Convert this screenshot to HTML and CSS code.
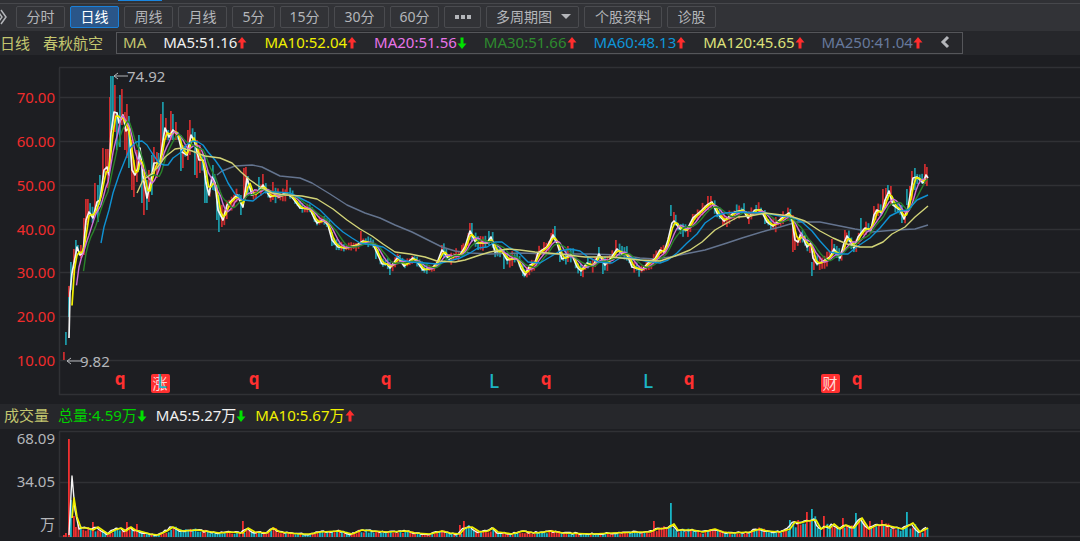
FILE: index.html
```html
<!DOCTYPE html>
<html lang="zh-CN">
<head>
    <meta charset="UTF-8">
    <meta name="viewport" content="width=device-width, initial-scale=1.0">
    <title>春秋航空 日线</title>
    <link rel="stylesheet" href="styles.css">
</head>
<body>
    <svg class="defs" aria-hidden="true">
        <symbol id="up" viewBox="0 0 10 14"><path d="M5 1 L9.5 6.5 H6.5 V12.5 H3.5 V6.5 H0.5 Z"/></symbol>
        <symbol id="down" viewBox="0 0 10 14"><path d="M5 13 L9.5 7.5 H6.5 V1.5 H3.5 V7.5 H0.5 Z"/></symbol>
    </svg>

    <nav class="toolbar">
        <span class="tab-strip"></span>
        <button class="more" aria-label="展开">
            <svg width="8" height="16" viewBox="0 0 8 16"><path d="M-3 1 L2 8 L-3 15 M1 1 L6 8 L1 15"/></svg>
        </button>
        <button class="btn">分时</button>
        <button class="btn active">日线</button>
        <button class="btn">周线</button>
        <button class="btn">月线</button>
        <button class="btn narrow">5分</button>
        <button class="btn">15分</button>
        <button class="btn mid">30分</button>
        <button class="btn">60分</button>
        <button class="btn dots" aria-label="更多周期"><i></i><i></i><i></i></button>
        <span class="select-wrap">
            <select class="btn" aria-label="多周期图"><option>多周期图</option></select>
        </span>
        <button class="btn wide">个股资料</button>
        <button class="btn">诊股</button>
    </nav>

    <div class="legend">
        <span class="name period">日线</span>
        <span class="name">春秋航空</span>
        <div class="ma-box">
            <span class="name">MA</span>
            <span class="ma5">MA5:51.16<svg class="arrow up"><use href="#up"/></svg></span>
            <span class="ma10">MA10:52.04<svg class="arrow up"><use href="#up"/></svg></span>
            <span class="ma20">MA20:51.56<svg class="arrow down"><use href="#down"/></svg></span>
            <span class="ma30">MA30:51.66<svg class="arrow up"><use href="#up"/></svg></span>
            <span class="ma60">MA60:48.13<svg class="arrow up"><use href="#up"/></svg></span>
            <span class="ma120">MA120:45.65<svg class="arrow up"><use href="#up"/></svg></span>
            <span class="ma250">MA250:41.04<svg class="arrow up"><use href="#up"/></svg></span>
            <button class="collapse" aria-label="收起">
                <svg width="10" height="14" viewBox="0 0 10 14"><path d="M8 2 L3 7 L8 12"/></svg>
            </button>
        </div>
    </div>

    <svg class="chart price" id="price"></svg>

    <div class="legend volume-legend">
        <span class="name">成交量</span>
        <span class="total">总量:4.59万<svg class="arrow down"><use href="#down"/></svg></span>
        <span class="ma5">MA5:5.27万<svg class="arrow down"><use href="#down"/></svg></span>
        <span class="ma10">MA10:5.67万<svg class="arrow up"><use href="#up"/></svg></span>
    </div>

    <svg class="chart volume" id="volume"></svg>

    <script src="chart.js"></script>
</body>
</html>
```

FILE: styles.css
```css
* {
    box-sizing: border-box;
}
body {
    margin: 0;
    background: #1d1e22;
    color: #b4b6ba;
    font-family: "Noto Sans", "Noto Sans CJK SC", sans-serif;
    font-size: 15px;
    overflow: hidden;
}
button, select {
    font: inherit;
    color: inherit;
    background: none;
    border: none;
    padding: 0;
}
.defs {
    display: none;
}

/* toolbar */
.toolbar {
    position: relative;
    display: flex;
    align-items: center;
    gap: 5px;
    height: 31px;
    padding-top: 3px;
    background: linear-gradient(#303135 3px, #47484c 3px, #47484c 4px, #323337 4px);
}
.tab-strip {
    position: absolute;
    left: 118px;
    top: 0;
    width: 44px;
    height: 1px;
    background: #1a86e0;
}
.more {
    width: 11px;
    height: 16px;
    flex: none;
    display: flex;
}
.more svg, .collapse svg {
    fill: none;
    stroke: #b4b6ba;
    stroke-width: 1.5;
}
.btn {
    flex: none;
    width: 49px;
    height: 22px;
    border: 1px solid #4a4b4f;
    border-radius: 2px;
    font-size: 14px;
    line-height: 20px;
    text-align: center;
}
.btn.active {
    background: #2a5689;
    border-color: #1a80d8;
    color: #fff;
}
.btn.narrow {
    width: 43px;
}
.btn.mid {
    width: 51px;
}
.btn.wide {
    width: 78px;
}
.btn.dots {
    width: 37px;
    display: flex;
    align-items: center;
    justify-content: center;
    gap: 2px;
}
.dots i {
    width: 4px;
    height: 4px;
    background: #b4b6ba;
}
.select-wrap {
    position: relative;
    display: flex;
}
.select-wrap select {
    appearance: none;
    width: 93px;
    padding-left: 9px;
    text-align: left;
}
.select-wrap::after {
    content: "";
    position: absolute;
    right: 8px;
    top: 8px;
    border: 5px solid transparent;
    border-top-color: #b4b6ba;
    border-bottom: none;
    pointer-events: none;
}

/* indicator rows */
.legend {
    display: flex;
    align-items: center;
    gap: 13px;
    height: 24px;
    padding-bottom: 1px;
    background: #26272b;
    line-height: 20px;
    white-space: nowrap;
}
.ma-box {
    display: flex;
    align-items: center;
    gap: 17px;
    height: 22px;
    padding: 0 12px 1px 6px;
    border: 1px solid #55565a;
}
.volume-legend {
    height: 25px;
    gap: 9px;
    padding-left: 4px;
    padding-bottom: 3px;
}
.arrow {
    width: 10px;
    height: 14px;
    vertical-align: -2px;
}
.arrow.up {
    fill: #ff2d2d;
}
.arrow.down {
    fill: #00e000;
}
.name { color: #c3c66f; }
.total { color: #00d000; }
.ma5 { color: #f0f0f0; }
.ma10 { color: #f0f000; }
.ma20 { color: #e874e8; }
.ma30 { color: #2e8b2e; }
.ma60 { color: #0f95d8; }
.ma120 { color: #dde07a; }
.ma250 { color: #66799c; }
.collapse {
    height: 14px;
    display: flex;
}
.collapse svg {
    stroke-width: 3;
}

/* charts */
.chart {
    display: block;
    width: 100%;
}
.price {
    height: 349px;
}
.volume {
    height: 137px;
}
.grid {
    stroke: #303135;
    stroke-width: 1.5;
}
.axis {
    fill: #b4b6ba;
    text-anchor: end;
}
.price .axis {
    fill: #f02c2c;
}
.note {
    fill: #b4b6ba;
}
.note-line {
    fill: none;
    stroke: #b4b6ba;
}
.bar-up { fill: #f03030; }
.bar-down { fill: #18b4c4; }
.price .bar-up { fill: #c82c2e; }
.price .bar-down { fill: #1c96a4; }
.line {
    fill: none;
    stroke-width: 1.4;
    stroke-linejoin: round;
}
.line-5 { stroke: #f4f4f4; }
.line-10 { stroke: #f0f000; }
.price .line-5, .line-10 { stroke-width: 1.7; }
.line-20 { stroke: #d070d8; }
.line-30 { stroke: #2a842a; }
.line-60 { stroke: #0f92d4; }
.line-120 { stroke: #d2d478; }
.line-250 { stroke: #64748f; }
.mark {
    font-size: 17px;
    font-weight: bold;
    text-anchor: middle;
}
.mark-q { fill: #ff3030; }
.mark-l {
    fill: #1cb4c4;
    font-size: 19px;
    font-weight: 500;
}
.badge { fill: #ff3030; }
.badge-text {
    fill: #ffd8d8;
    font-size: 15px;
    text-anchor: middle;
}
```

FILE: chart.js
```js
const NS = 'http://www.w3.org/2000/svg';
const STEP = 2.44;

// x,y knots of the averages
const ma5 = [69,338, 70,293, 72,273, 75,258, 77,247, 80,255, 83,253, 86,220, 89,212, 93,218, 97,202, 100,200, 104,170, 107,167, 109,175, 111,133, 114,112, 117,113, 119,123, 123,115, 126,131, 129,128, 132,170, 135,175, 138,168, 140,148, 143,177, 147,198, 151,180, 154,163, 160,163, 162,147, 165,128, 169,137, 173,130, 178,135, 182,152, 187,155, 191,135, 195,143, 199,160, 203,160, 206,183, 209,195, 212,177, 215,183, 218,210, 223,220, 227,205, 232,200, 237,195, 243,207, 247,178, 252,195, 257,193, 263,185, 270,197, 275,195, 279,197, 285,193, 292,197, 300,208, 310,209, 314,218, 317,223, 323,220, 328,225, 332,240, 338,247, 345,248, 357,245, 363,241, 373,244, 377,253, 382,264, 387,264, 390,268, 398,257, 404,266, 413,258, 418,263, 423,270, 432,268, 437,263, 442,250, 449,259, 455,255, 460,255, 465,247, 470,231, 476,243, 487,243, 491,237, 495,252, 502,251, 507,260, 517,258, 521,269, 525,275, 530,265, 535,263, 538,253, 547,247, 553,235, 557,243, 562,259, 572,255, 577,267, 581,271, 587,263, 593,266, 599,254, 605,265, 611,258, 617,249, 622,254, 627,254, 632,267, 642,270, 648,263, 655,259, 660,250, 664,252, 668,240, 672,223, 674,221, 680,229, 687,230, 693,218, 700,212, 707,205, 712,202, 717,213, 724,221, 735,212, 743,210, 748,218, 755,210, 761,210, 767,222, 773,226, 782,218, 789,213, 792,220, 795,240, 798,242, 801,233, 807,247, 811,243, 813,258, 817,264, 822,262, 830,257, 834,249, 840,258, 844,243, 847,236, 854,248, 858,237, 865,228, 871,230, 874,215, 877,210, 882,213, 885,200, 889,191, 893,205, 900,210, 904,219, 908,208, 913,178, 917,177, 923,183, 926,175, 928,178];
const ma60 = [101,243, 104,227, 109,210, 113,193, 119,175, 125,160, 130,148, 136,142, 142,141, 147,145, 152,153, 159,163, 164,165, 168,165, 173,158, 180,153, 186,145, 193,141, 198,142, 203,145, 208,152, 215,160, 222,170, 228,183, 235,194, 243,200, 253,201, 258,197, 265,192, 275,192, 290,193, 300,198, 310,203, 320,210, 327,217, 335,225, 343,232, 352,238, 360,243, 373,245, 383,247, 392,253, 400,259, 410,262, 425,263, 437,264, 445,262, 460,258, 470,253, 478,248, 487,247, 495,242, 502,242, 510,248, 518,252, 528,262, 540,263, 550,257, 560,251, 570,249, 580,251, 588,257, 598,262, 612,263, 620,258, 632,258, 645,261, 660,263, 668,260, 677,253, 687,243, 697,234, 705,223, 715,216, 725,213, 740,212, 765,213, 780,216, 792,217, 802,222, 812,231, 820,241, 830,252, 840,254, 848,254, 858,246, 870,238, 880,228, 890,216, 900,211, 908,210, 917,200, 928,195];
const ma120 = [137,193, 143,180, 150,175, 157,168, 165,157, 175,149, 182,148, 192,151, 205,156, 220,158, 232,163, 241,172, 250,180, 260,187, 272,193, 285,195, 302,196, 317,199, 333,209, 347,220, 360,229, 372,236, 383,244, 395,252, 410,254, 425,257, 437,261, 455,262, 465,260, 480,255, 490,252, 507,249, 520,250, 535,252, 560,254, 585,257, 612,257, 640,260, 660,261, 675,256, 690,250, 702,242, 715,230, 727,223, 738,217, 750,216, 765,213, 790,216, 805,221, 820,231, 833,238, 847,244, 860,247, 872,247, 883,242, 892,234, 905,227, 915,217, 928,206];
const ma250 = [217,175, 222,171, 235,166, 252,165, 262,167, 280,176, 300,178, 312,183, 330,194, 347,205, 365,213, 380,218, 395,225, 412,232, 428,240, 442,247, 455,251, 470,253, 490,254, 520,253, 550,254, 590,254, 620,255, 640,258, 655,259, 670,257, 690,253, 705,250, 727,243, 742,238, 765,231, 780,227, 797,222, 820,222, 840,226, 855,229, 872,232, 895,230, 915,229, 928,225];

// x, high, low, 1 = up
const swings = [
    [64,352,360,1], [66,332,345,0], [69,286,297,1], [69,297,317,0], [71,262,290,0], [74,249,275,1], [76,240,258,0], [81,245,258,1],
    [84,218,255,1], [86,199,225,1], [88,199,222,1], [95,183,215,1], [98,185,222,0], [100,175,205,0], [103,148,180,1], [106,149,175,1],
    [108,149,188,1], [110,97,165,1], [111,76,130,0], [113,76,130,0], [115,85,132,1], [117,112,150,0], [120,95,147,0], [122,89,125,1],
    [125,112,150,1], [127,104,158,1], [129,116,168,0], [132,140,190,1], [134,160,197,1], [137,150,182,1], [139,135,170,0], [142,165,203,0],
    [144,177,215,1], [147,180,210,0], [149,170,202,1], [152,155,195,0], [154,147,175,1], [157,152,178,1], [161,114,160,1], [163,102,150,0],
    [166,118,140,1], [171,111,140,1], [173,114,140,0], [176,122,140,1], [181,135,171,0], [183,145,168,1], [188,130,160,1], [190,120,155,1],
    [195,132,175,0], [197,140,178,1], [200,145,173,1], [205,155,203,0], [207,170,203,0], [213,165,190,0], [217,185,220,0], [219,195,232,0],
    [222,205,227,1], [241,195,215,0], [244,168,200,1], [246,167,190,1], [248,176,196,0], [259,177,193,0], [263,174,190,1], [273,182,200,1],
    [287,180,196,1], [332,232,246,0], [361,231,243,1], [376,245,259,0], [390,262,275,0], [442,245,255,1], [462,245,256,1], [470,223,240,1],
    [472,223,242,0], [489,231,245,0], [504,250,269,0], [523,262,276,0], [553,229,240,1], [555,226,243,0], [560,246,262,0], [568,246,262,1],
    [581,264,276,0], [599,247,260,0], [603,258,274,0], [616,240,254,1], [671,205,216,0], [674,212,222,1], [708,196,210,1], [711,196,208,1],
    [723,212,226,1], [765,210,224,0], [793,215,252,1], [795,225,250,1], [812,262,276,0], [814,255,270,1], [832,239,256,1], [845,230,250,1],
    [861,218,236,0], [874,206,222,1], [883,189,212,1], [886,188,206,1], [888,185,200,0], [891,186,205,1], [902,205,223,0], [907,189,205,0],
    [910,186,208,1], [912,171,200,1], [915,168,190,0], [925,164,184,1], [927,167,186,1]
];

const volMa = [72,518, 74,498, 77,517, 81,528, 88,528, 93,530, 98,527, 108,534, 115,530, 121,528, 126,531, 131,527, 135,530, 143,532, 150,534, 158,535, 167,531, 173,527, 182,531, 197,530, 220,533, 230,532, 243,533, 248,528, 255,532, 267,533, 273,528, 280,532, 300,534, 310,534, 320,532, 340,531, 352,534, 362,530, 373,531, 387,532, 407,531, 415,533, 430,534, 442,531, 450,533, 460,534, 465,528, 472,527, 480,532, 488,531, 493,528, 498,532, 512,534, 523,531, 535,533, 552,531, 563,533, 593,534, 613,533, 640,532, 650,532, 657,529, 668,528, 674,524, 678,530, 693,530, 703,532, 715,529, 723,532, 732,533, 750,532, 760,529, 767,531, 780,532, 790,529, 795,522, 800,523, 807,521, 816,520, 821,529, 827,526, 830,528, 834,524, 840,529, 846,525, 854,528, 862,518, 869,529, 877,525, 885,525, 903,529, 913,523, 920,532, 928,528];
const volSpikes = [[64,535,1], [66,533,1], [69,439,1], [71,500,0], [74,516,1], [76,527,1], [93,522,1], [127,522,1], [137,524,1], [243,521,1], [460,525,1], [464,521,1], [654,521,1], [671,503,0], [790,520,0], [807,512,1], [812,509,0], [824,516,1], [843,518,1], [856,513,0], [870,521,1], [882,520,1], [907,512,0]];

function add(parent, tag, attrs, text) {
    const el = document.createElementNS(NS, tag);
    Object.entries(attrs).forEach(([k, v]) => el.setAttribute(k, v));
    if (text) el.textContent = text;
    parent.appendChild(el);
    return el;
}

function at(knots, x) {
    if (x <= knots[0]) return knots[1];
    for (let i = 2; i < knots.length; i += 2) {
        if (x <= knots[i]) {
            const t = (x - knots[i - 2]) / (knots[i] - knots[i - 2]);
            return knots[i - 1] + t * (knots[i + 1] - knots[i - 1]);
        }
    }
    return knots[knots.length - 1];
}

// average of the last n five-day values, three pixels apart
function slower(n, from) {
    const out = [];
    for (let x = from; x <= 928; x += STEP) {
        let sum = 0;
        for (let i = 0; i < n; i++) sum += at(ma5, x - i * 3);
        out.push(x, sum / n);
    }
    return out;
}

let seed = 17;
function rand() {
    seed = (seed * 16807) % 2147483647;
    return seed / 2147483647;
}

function line(parent, knots, n) {
    add(parent, 'polyline', { points: knots.join(' '), class: 'line line-' + n });
}

function bar(parent, x, top, bottom, up) {
    add(parent, 'rect', { x: x - 1, y: top, width: 1.8, height: bottom - top, class: up ? 'bar-up' : 'bar-down' });
}

function drawGrid(parent, rows, top, bottom) {
    rows.concat(top, bottom).forEach(y => add(parent, 'line', { x1: 59, x2: '100%', y1: y - 0.5, y2: y - 0.5, class: 'grid' }));
    add(parent, 'line', { x1: 59.5, x2: 59.5, y1: top, y2: bottom, class: 'grid' });
}

function note(parent, x, y, text) {
    add(parent, 'path', { d: `M${x + 14} ${y} H${x} M${x + 4} ${y - 3} L${x} ${y} L${x + 4} ${y + 3}`, class: 'note-line' });
    add(parent, 'text', { x: x + 13, y: y + 6, class: 'note' }, text);
}

function drawPrice() {
    const g = add(document.getElementById('price'), 'g', { transform: 'translate(0 -55)' });
    const rows = [98, 142, 186, 230, 273, 317, 361];
    drawGrid(g, rows, 68, 395);
    rows.forEach((y, i) => add(g, 'text', { x: 55, y: y + 5, class: 'axis' }, (70 - i * 10).toFixed(2)));

    for (let x = 78; x < 928; x += STEP) {
        if (swings.some(s => Math.abs(s[0] - x) < 1.5)) continue;
        const y = at(ma5, x - 1);
        const slope = at(ma5, x + 1) - at(ma5, x - 2);
        const size = x < 250 ? 9 : x < 300 ? 6 : x < 440 ? 4 : 6;
        bar(g, x, y - 2 - rand() * size, y + 2 + rand() * size, slope + (rand() - 0.5) * 4 < 0);
    }
    swings.forEach(s => bar(g, ...s));

    line(g, ma250, 250);
    line(g, ma5, 5);
    line(g, slower(2, 72), 10);
    line(g, slower(4, 76.5), 20);
    line(g, slower(6, 83.5), 30);
    line(g, ma60, 60);
    line(g, ma120, 120);

    note(g, 114, 76, '74.92');
    note(g, 67, 361, '9.82');

    [120, 254, 386, 546, 689, 857].forEach(x => add(g, 'text', { x, y: 385, class: 'mark mark-q' }, 'q'));
    [[160, '涨'], [830, '财']].forEach(([x, text]) => {
        add(g, 'rect', { x: x - 9, y: 374, width: 19, height: 19, rx: 2, class: 'badge' });
        add(g, 'text', { x, y: 389, class: 'badge-text' }, text);
    });
    [162, 494, 648].forEach(x => add(g, 'text', { x, y: 388, class: 'mark mark-l' }, 'L'));
}

function drawVolume() {
    const g = add(document.getElementById('volume'), 'g', { transform: 'translate(0 -429)' });
    drawGrid(g, [483], 432, 537);
    [[444, '68.09'], [487, '34.05'], [530, '万']].forEach(([y, text]) => add(g, 'text', { x: 55, y, class: 'axis' }, text));

    for (let x = 78.5; x < 928; x += STEP) {
        if (volSpikes.some(s => Math.abs(s[0] - x) < 1.3)) continue;
        const h = 537 - at(volMa, x);
        bar(g, x, 537 - h * (0.65 + rand() * 0.6), 537, rand() < 0.5);
    }
    volSpikes.forEach(([x, top, up]) => bar(g, x, top, 537, up));

    const fast = [69,535, 71,495, 72,476, 75,510, 79,529];
    for (let x = 82; x <= 928; x += STEP) fast.push(x, Math.min(536, at(volMa, x + 2) + (rand() - 0.5) * 2));
    line(g, fast, 5);
    line(g, volMa, 10);
}

drawPrice();
drawVolume();
```
